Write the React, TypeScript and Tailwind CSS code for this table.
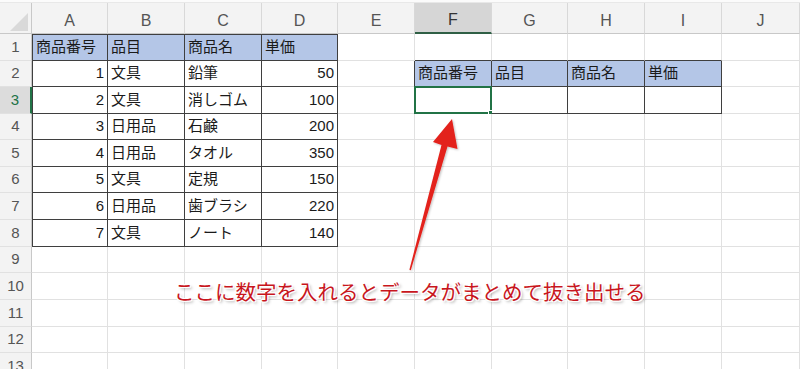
import React from 'react'

const cols = ['A', 'B', 'C', 'D', 'E', 'F', 'G', 'H', 'I', 'J']
const rowHeights = [27, 26, 27, 26, 27, 26, 27, 27, 26, 27, 27, 26, 27]

const DARK = '#3f3f3f'

// cell values keyed by "row-col" (col index 0 = A)
const data: Record<string, string> = {
  '1-0': '商品番号', '1-1': '品目', '1-2': '商品名', '1-3': '単価',
  '2-5': '商品番号', '2-6': '品目', '2-7': '商品名', '2-8': '単価',
}
const rows = [
  ['1', '文具', '鉛筆', '50'],
  ['2', '文具', '消しゴム', '100'],
  ['3', '日用品', '石鹸', '200'],
  ['4', '日用品', 'タオル', '350'],
  ['5', '文具', '定規', '150'],
  ['6', '日用品', '歯ブラシ', '220'],
  ['7', '文具', 'ノート', '140'],
]
rows.forEach((r, i) => r.forEach((v, c) => { data[`${i + 2}-${c}`] = v }))

const inT1 = (r: number, c: number) => r >= 1 && r <= 8 && c <= 3
const inT2 = (r: number, c: number) => r >= 2 && r <= 3 && c >= 5 && c <= 8

function Cell({ r, c }: { r: number; c: number }) {
  const v = data[`${r}-${c}`]
  const dark = inT1(r, c) || inT2(r, c)
  const rightDark = dark || (c === 4 && (r === 2 || r === 3))
  const bottomDark = dark || (r === 1 && c >= 5 && c <= 8)
  const fill = (r === 1 && c <= 3) || (r === 2 && c >= 5 && c <= 8)
  const numeric = v !== undefined && /^\d+$/.test(v)
  const selected = r === 3 && c === 5
  return (
    <div
      className={`relative flex items-center overflow-visible whitespace-nowrap border-r border-b text-[15px] text-[#1a1a1a] ${
        numeric ? 'justify-end pr-[3px]' : 'pl-[3px]'
      } ${fill ? 'bg-[#b4c6e7]' : 'bg-white'} ${c === 0 && inT1(r, c) ? 'border-l border-l-[#3f3f3f]' : ''} ${
        r === 1 && c <= 3 ? 'border-t border-t-[#3f3f3f]' : ''
      }`}
      style={{
        borderRightColor: rightDark ? DARK : '#e1e1e1',
        borderBottomColor: bottomDark ? DARK : '#e1e1e1',
      }}
    >
      {v}
      {selected && (
        <div className="absolute -left-[1px] -top-[1px] -right-[1px] -bottom-[1px] border-2 border-[#217346]">
          <div className="absolute -right-[4px] -bottom-[4px] w-[6px] h-[6px] bg-[#217346] border border-white" />
        </div>
      )}
    </div>
  )
}

export default function App() {
  return (
    <div
      className="relative w-[800px] h-[369px] overflow-hidden bg-white"
      style={{ fontFamily: '"Liberation Sans", "Noto Sans CJK JP", sans-serif' }}
    >
      {/* top strip */}
      <div className="h-[3px] bg-[#fbfbfb] border-b border-[#e8e8e8]" />
      <div className="grid grid-cols-[32px_76px_77px_77px_76px_77px_77px_76px_77px_77px_78px] bg-[#f3f3f3]">
        {/* column headers */}
        <div className="h-[31px] flex items-end justify-end border-b border-r border-[#c8c8c8] pb-[1px] pr-[2px]">
          <svg width="20" height="20" viewBox="0 0 20 20">
            <polygon points="19,1 19,19 1,19" fill="#d9d9d9" />
          </svg>
        </div>
        {cols.map((c, i) => (
          <div
            key={c}
            className={`h-[31px] pt-[5px] flex items-center justify-center text-[16px] ${
              i === 5
                ? 'bg-[#d6d6d6] border-b-2 border-b-[#2f5f45] text-[#333]'
                : 'border-b border-b-[#c8c8c8] text-[#555]'
            } border-r border-r-[#d8d8d8]`}
          >
            {c}
          </div>
        ))}

        {rowHeights.map((h, ri) => {
          const r = ri + 1
          return (
            <React.Fragment key={r}>
              <div
                style={{ height: h }}
                className={`flex items-center justify-center text-[15px] border-b border-b-[#e1e1e1] ${
                  r === 3
                    ? 'bg-[#dcdcdc] text-[#217346] border-r-2 border-r-[#217346]'
                    : 'bg-[#f3f3f3] text-[#555] border-r border-r-[#c8c8c8]'
                }`}
              >
                {r}
              </div>
              {cols.map((_, c) => (
                <Cell key={c} r={r} c={c} />
              ))}
            </React.Fragment>
          )
        })}
      </div>

      {/* arrow */}
      <svg className="absolute left-0 top-0 pointer-events-none" width="800" height="369">
        <defs>
          <filter id="sh" x="-20%" y="-20%" width="140%" height="140%">
            <feDropShadow dx="1" dy="1" stdDeviation="1" floodColor="#000" floodOpacity="0.25" />
          </filter>
        </defs>
        <polygon
          points="452,119 457.5,149 447.5,146.5 410.8,270.2 409.4,269.8 441.5,145 433,142"
          fill="#e3211b"
          filter="url(#sh)"
        />
      </svg>

      {/* callout text */}
      <div
        className="absolute left-[174px] top-[276px] text-[20.5px] leading-[30px] text-[#c8161d] whitespace-nowrap [text-shadow:0_0_2px_#fff,0_0_2px_#fff,1px_1px_0_#fff,-1px_-1px_0_#fff,1px_-1px_0_#fff,-1px_1px_0_#fff,2px_2px_3px_rgba(0,0,0,0.35)]"
        style={{ fontFamily: '"Noto Sans CJK JP", sans-serif' }}
      >
        ここに数字を入れるとデータがまとめて抜き出せる
      </div>
    </div>
  )
}
